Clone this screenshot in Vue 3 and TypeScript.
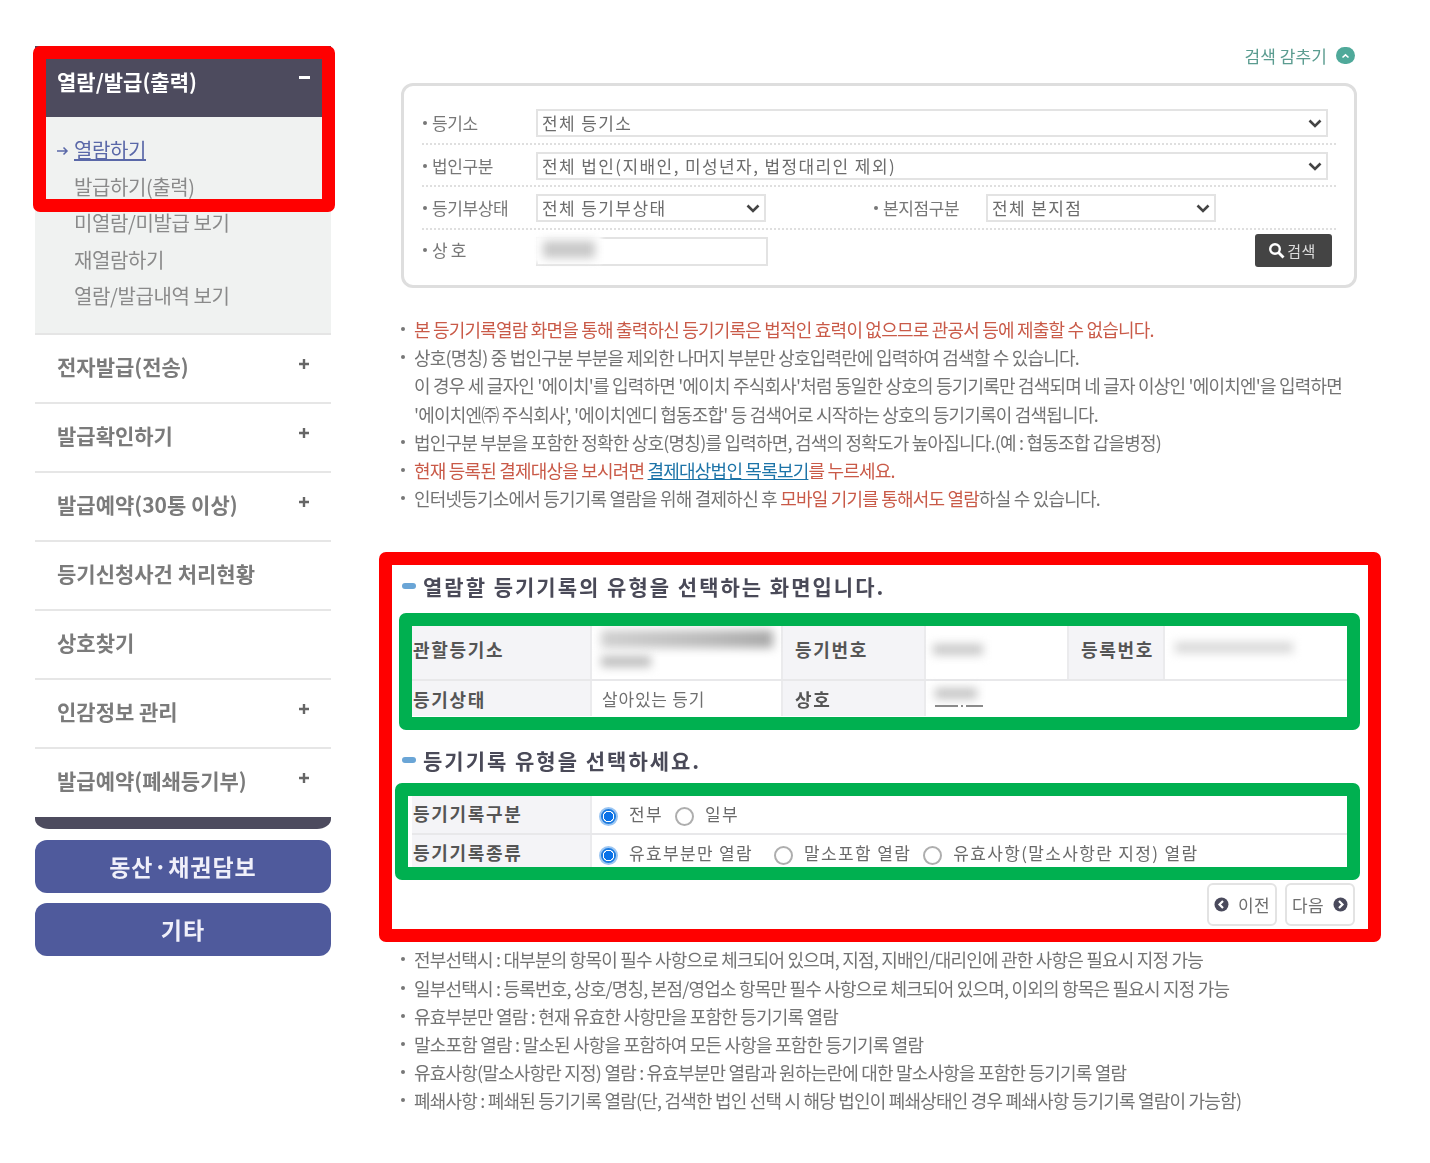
<script setup lang="ts">
interface Seg { t: string; c?: string }
const subItems: string[] = ['발급하기(출력)', '미열람/미발급 보기', '재열람하기', '열람/발급내역 보기']
const menu: { label: string; plus: boolean }[] = [
  { label: '전자발급(전송)', plus: true },
  { label: '발급확인하기', plus: true },
  { label: '발급예약(30통 이상)', plus: true },
  { label: '등기신청사건 처리현황', plus: false },
  { label: '상호찾기', plus: false },
  { label: '인감정보 관리', plus: true },
  { label: '발급예약(폐쇄등기부)', plus: true },
]
const topNotes: { segs: Seg[]; plain?: boolean }[] = [
  { segs: [{ t: '본 등기기록열람 화면을 통해 출력하신 등기기록은 법적인 효력이 없으므로 관공서 등에 제출할 수 없습니다.', c: 'red' }] },
  { segs: [{ t: '상호(명칭) 중 법인구분 부분을 제외한 나머지 부분만 상호입력란에 입력하여 검색할 수 있습니다.' }] },
  { plain: true, segs: [{ t: "이 경우 세 글자인 '에이치'를 입력하면 '에이치 주식회사'처럼 동일한 상호의 등기기록만 검색되며 네 글자 이상인 '에이치엔'을 입력하면" }] },
  { plain: true, segs: [{ t: "'에이치엔㈜ 주식회사', '에이치엔디 협동조합' 등 검색어로 시작하는 상호의 등기기록이 검색됩니다." }] },
  { segs: [{ t: '법인구분 부분을 포함한 정확한 상호(명칭)를 입력하면, 검색의 정확도가 높아집니다.(예 : 협동조합 갑을병정)' }] },
  { segs: [{ t: '현재 등록된 결제대상을 보시려면 ', c: 'red' }, { t: '결제대상법인 목록보기', c: 'link' }, { t: '를 누르세요.', c: 'red' }] },
  { segs: [{ t: '인터넷등기소에서 등기기록 열람을 위해 결제하신 후 ' }, { t: '모바일 기기를 통해서도 열람', c: 'red' }, { t: '하실 수 있습니다.' }] },
]
const bottomNotes: string[] = [
  '전부선택시 : 대부분의 항목이 필수 사항으로 체크되어 있으며, 지점, 지배인/대리인에 관한 사항은 필요시 지정 가능',
  '일부선택시 : 등록번호, 상호/명칭, 본점/영업소 항목만 필수 사항으로 체크되어 있으며, 이외의 항목은 필요시 지정 가능',
  '유효부분만 열람 : 현재 유효한 사항만을 포함한 등기기록 열람',
  '말소포함 열람 : 말소된 사항을 포함하여 모든 사항을 포함한 등기기록 열람',
  '유효사항(말소사항란 지정) 열람 : 유효부분만 열람과 원하는란에 대한 말소사항을 포함한 등기기록 열람',
  '폐쇄사항 : 폐쇄된 등기기록 열람(단, 검색한 법인 선택 시 해당 법인이 폐쇄상태인 경우 폐쇄사항 등기기록 열람이 가능함)',
]
</script>

<template>
  <div class="page">
    <div class="content">
      <aside class="side">
        <div class="side-head"><span>열람/발급(출력)</span><i class="minus"></i></div>
        <div class="side-sub">
          <div class="sub-row current">
            <svg class="arrow" width="13" height="10" viewBox="0 0 13 10"><path d="M1 5h10M7.500 1.500 11 5 7.500 8.500" fill="none" stroke="#5a68a8" stroke-width="1.500"/></svg>
            <a>열람하기</a>
          </div>
          <div v-for="s in subItems" :key="s" class="sub-row">{{ s }}</div>
        </div>
        <div v-for="m in menu" :key="m.label" class="side-item">
          <span>{{ m.label }}</span>
          <svg v-if="m.plus" class="plus" width="12" height="12" viewBox="0 0 12 12"><path d="M6 1v10M1 6h10" stroke="#666" stroke-width="2.400"/></svg>
        </div>
        <div class="side-end"></div>
        <div class="side-btn">동산·채권담보</div>
        <div class="side-btn">기타</div>
      </aside>

      <main class="main">
        <div class="hide-row">
          <span>검색 감추기</span>
          <i class="hide-ico"><svg width="9" height="6" viewBox="0 0 9 6"><path d="M1.500 4.500 4.500 1.800 7.500 4.500" fill="none" stroke="#fff" stroke-width="1.600"/></svg></i>
        </div>

        <div class="search">
          <div class="s-row">
            <label class="s-label">등기소</label>
            <div class="sel full"><select><option>전체 등기소</option></select><svg class="chev" width="14" height="9" viewBox="0 0 14 9"><path d="M1.500 1.500 7 7l5.500-5.500" fill="none" stroke="#444" stroke-width="2.600"/></svg></div>
          </div>
          <div class="s-row">
            <label class="s-label">법인구분</label>
            <div class="sel full"><select><option>전체 법인(지배인, 미성년자, 법정대리인 제외)</option></select><svg class="chev" width="14" height="9" viewBox="0 0 14 9"><path d="M1.500 1.500 7 7l5.500-5.500" fill="none" stroke="#444" stroke-width="2.600"/></svg></div>
          </div>
          <div class="s-row">
            <label class="s-label">등기부상태</label>
            <div class="sel half"><select><option>전체 등기부상태</option></select><svg class="chev" width="14" height="9" viewBox="0 0 14 9"><path d="M1.500 1.500 7 7l5.500-5.500" fill="none" stroke="#444" stroke-width="2.600"/></svg></div>
            <label class="s-label second">본지점구분</label>
            <div class="sel half"><select><option>전체 본지점</option></select><svg class="chev" width="14" height="9" viewBox="0 0 14 9"><path d="M1.500 1.500 7 7l5.500-5.500" fill="none" stroke="#444" stroke-width="2.600"/></svg></div>
          </div>
          <div class="s-row last">
            <label class="s-label name-label">상 호</label>
            <div class="name-input"><i class="smear name-smear"></i></div>
            <button class="search-btn">
              <svg width="17" height="17" viewBox="0 0 17 17"><circle cx="7" cy="7" r="4.800" fill="none" stroke="#fff" stroke-width="2.400"/><path d="m10.500 10.500 5 5" stroke="#fff" stroke-width="2.800"/></svg>
              <span>검색</span>
            </button>
          </div>
        </div>

        <ul class="notes top-notes">
          <li v-for="(n, i) in topNotes" :key="i" :class="{ plain: n.plain }">
            <span v-for="(s, j) in n.segs" :key="j" :class="s.c">{{ s.t }}</span>
          </li>
        </ul>

        <section class="panel">
          <h3 class="title first"><i class="pill"></i>열람할 등기기록의 유형을 선택하는 화면입니다.</h3>
          <table class="info">
            <tbody>
              <tr class="r1">
                <th class="c1">관할등기소</th>
                <td class="c2"><i class="smear s-a"></i><i class="smear s-b"></i></td>
                <th class="c3">등기번호</th>
                <td class="c4"><i class="smear s-c"></i></td>
                <th class="c5">등록번호</th>
                <td><i class="smear s-d"></i></td>
              </tr>
              <tr class="r2">
                <th>등기상태</th>
                <td class="val">살아있는 등기</td>
                <th class="inner">상호</th>
                <td colspan="3"><i class="smear s-e"></i><i class="dash"></i></td>
              </tr>
            </tbody>
          </table>
          <h3 class="title second"><i class="pill"></i>등기기록 유형을 선택하세요.</h3>
          <table class="info pick">
            <tbody>
              <tr class="p1">
                <th class="c1">등기기록구분</th>
                <td>
                  <div class="opts">
                    <span class="radio on"></span><span class="opt g1">전부</span>
                    <span class="radio"></span><span class="opt">일부</span>
                  </div>
                </td>
              </tr>
              <tr class="p2">
                <th>등기기록종류</th>
                <td>
                  <div class="opts">
                    <span class="radio on"></span><span class="opt g2">유효부분만 열람</span>
                    <span class="radio"></span><span class="opt g1">말소포함 열람</span>
                    <span class="radio"></span><span class="opt">유효사항(말소사항란 지정) 열람</span>
                  </div>
                </td>
              </tr>
            </tbody>
          </table>
          <div class="nav-row">
            <button class="nav-btn"><svg width="15" height="15" viewBox="0 0 15 15"><circle cx="7.500" cy="7.500" r="7" fill="#4a4a5c"/><path d="M9 4 5.500 7.500 9 11" fill="none" stroke="#fff" stroke-width="2.200"/></svg><span>이전</span></button>
            <button class="nav-btn"><span>다음</span><svg width="15" height="15" viewBox="0 0 15 15"><circle cx="7.500" cy="7.500" r="7" fill="#4a4a5c"/><path d="M6 4l3.500 3.500L6 11" fill="none" stroke="#fff" stroke-width="2.200"/></svg></button>
          </div>
        </section>

        <ul class="notes bottom-notes">
          <li v-for="n in bottomNotes" :key="n">{{ n }}</li>
        </ul>
      </main>
    </div>

    <div class="mark frame-red m1"></div>
    <div class="mark frame-red m2"></div>
    <div class="mark frame-green m3"></div>
    <div class="mark frame-green m4"></div>
  </div>
</template>

<style>
html, body { margin: 0; background: #fff; }
</style>

<style scoped>
.page {
  position: relative;
  width: 1430px;
  height: 1163px;
  overflow: hidden;
  background: #fff;
  font-family: "Noto Sans CJK KR", "Noto Sans", sans-serif;
  color: #666;
}
.content { display: flex; align-items: flex-start; filter: blur(0.7px); }

/* sidebar */
.side { width: 296px; margin: 46px 0 0 35px; flex: none; }
.side-head {
  height: 71px; background: #4d4b5e; color: #fff; display: flex; justify-content: space-between;
  padding: 20px 21px 0 22px; box-sizing: border-box; font-size: 21px; font-weight: 700; line-height: 30px;
}
.minus { width: 11px; height: 3px; background: #fff; margin-top: 10px; }
.side-sub {
  height: 218px; box-sizing: border-box; background: #f0f2f1; border-bottom: 2px solid #e5e5e5; padding-top: 15px;
}
.sub-row {
  height: 36.500px; line-height: 36.500px; padding-left: 39px; font-size: 20px; letter-spacing: -0.400px; color: #8a8a8a; position: relative;
}
.current a { color: #5a68a8; text-decoration: underline; }
.arrow { position: absolute; left: 21px; top: 14px; }
.side-item {
  height: 69px; box-sizing: border-box; border-bottom: 2px solid #e6e6e6; padding: 0 21px 0 22px;
  display: flex; justify-content: space-between; font-size: 21px; font-weight: 700; color: #7b7b7b; line-height: 62px;
}
.side-item:nth-last-of-type(4) { border-bottom: 0; height: 68px; }
.plus { margin-top: 23px; }
.side-end { height: 12px; background: #4d4b5e; border-radius: 0 0 14px 14px / 0 0 10px 10px; }
.side-btn {
  height: 53px; margin-top: 10px; border-radius: 12px; background: #4f5a9c; color: #f0f0fa; text-align: center;
  font-size: 23px; font-weight: 700; letter-spacing: 1px; line-height: 53px;
}
.side-end + .side-btn { margin-top: 11px; }

/* main */
.main { width: 956px; margin-left: 70px; flex: none; padding-top: 44px; }
.hide-row { height: 39px; display: flex; justify-content: flex-end; align-items: flex-start; padding-right: 2px; color: #5b9c90; font-size: 17px; letter-spacing: 0.100px; line-height: 23px; gap: 9px; }
.hide-ico { width: 19px; height: 17px; border-radius: 9px; background: #4fa99a; margin-top: 3px; display: flex; align-items: center; justify-content: center; }
.search {
  height: 205px; box-sizing: border-box; border: 3px solid #dedede; border-radius: 12px; padding: 16px 18px 0 18px;
}
.s-row { height: 42.500px; box-sizing: border-box; border-bottom: 2px dotted #dfdfdf; display: flex; align-items: flex-start; padding-top: 7px; }
.s-row.last { border-bottom: 0; padding-top: 7px; position: relative; }
.s-label { width: 114px; flex: none; font-size: 17px; letter-spacing: -0.400px; color: #777; line-height: 28px; position: relative; padding-left: 10px; box-sizing: border-box; }
.s-label::before { content: ""; position: absolute; left: 1px; top: 12px; width: 4px; height: 4px; border-radius: 50%; background: #777; }
.s-label.second { width: 113px; margin-left: 107px; }
.name-label { margin-top: -1px; }
.sel { position: relative; height: 28px; }
.sel.full { width: 792px; }
.sel.half { width: 230px; }
.sel select {
  appearance: none; width: 100%; height: 100%; box-sizing: border-box; border: 2px solid #e3e3e3; border-radius: 0; background: #fff;
  font-family: inherit; font-size: 17px; letter-spacing: 1.400px; color: #6c6c6c; padding: 0 0 0 4px; line-height: 22px; outline: none;
}
.chev { position: absolute; right: 6px; top: 10px; }
.name-input { width: 232px; height: 29px; box-sizing: border-box; border: 2px solid #e3e3e3; position: relative; }
.name-input::before { content: ""; position: absolute; left: -4px; top: -4px; width: 68px; height: 28px; background: #fff; filter: blur(2px); }
.smear { display: block; position: absolute; background: #c8c8c8; filter: blur(5px); }
.name-smear { left: 5px; top: 2px; width: 52px; height: 17px; }
.search-btn {
  margin: -3px 0 0 487px; width: 77px; height: 33px; border: 0; border-radius: 3px; background: #444; color: #ddd;
  display: flex; align-items: center; justify-content: center; gap: 2px; font-family: inherit; font-size: 15px; padding: 0 3px 0 0; letter-spacing: 0.500px;
}

/* notes */
.notes { list-style: none; margin: 0; padding: 0; font-size: 18px; letter-spacing: -0.800px; line-height: 28.200px; color: #737373; white-space: nowrap; }
.notes li { position: relative; padding-left: 13px; }
.notes li::before { content: ""; position: absolute; left: 0; top: 12px; width: 4px; height: 4px; border-radius: 50%; background: #777; }
.notes li.plain::before { display: none; }
.top-notes { margin-top: 27px; }
.red { color: #c95a48; }
.link { color: #1d74a8; text-decoration: underline; }

/* panel */
.panel { margin-top: 40px; height: 391px; }
.title { margin: 0; display: flex; align-items: center; color: #4a4a58; font-size: 21px; font-weight: 700; letter-spacing: 2px; line-height: 30px; }
.title.first { margin-left: 1px; padding-top: 19px; }
.title.second { margin-left: 1px; margin-top: 29px; }
.pill { width: 14px; height: 6px; border-radius: 3px; background: #6aa5d6; margin-right: 7px; }
.info { border-collapse: collapse; margin-left: 11px; width: 935px; table-layout: fixed; margin-top: 24px; font-size: 17px; color: #6f6f6f; }
.info th { background: #f4f4f7; color: #555; text-align: left; font-weight: 700; font-size: 18px; letter-spacing: 1.700px; padding: 0 0 0 1px; }
.info th, .info td { box-sizing: border-box; }
.info td, .info th { border-bottom: 2px solid #e8e8ea; border-right: 2px solid #ebebed; position: relative; }
.info tr:last-child td, .info tr:last-child th { border-bottom: 0; }
.info td:last-child { border-right: 0; }
.info .r1 th { padding-bottom: 6px; }
.info th.c3, .info th.c5, .info th.inner { padding-left: 12px; }
.c1 { width: 179px; }
.c2 { width: 191px; }
.c3 { width: 143px; }
.c4 { width: 143px; }
.c5 { width: 96px; }
.r1 { height: 55px; }
.r2 { height: 36px; }
.val { padding-left: 10px; letter-spacing: 0.800px; }
.s-a { left: 9px; top: 5px; width: 172px; height: 18px; background: linear-gradient(90deg, #d0d0d0, #bbb 60%, #a8a8a8); }
.s-b { left: 9px; top: 31px; width: 50px; height: 11px; background: #bdbdbd; }
.s-c { left: 7px; top: 19px; width: 50px; height: 11px; }
.s-d { left: 10px; top: 17px; width: 118px; height: 11px; background: #d8d8d8; }
.s-e { left: 9px; top: 7px; width: 42px; height: 11px; background: #c4c4c4; }
.dash { display: block; position: absolute; left: 9px; top: 24px; width: 48px; height: 2px; background: linear-gradient(90deg, #8a8a8a 0 23px, #fff 23px 26px, #8a8a8a 26px 28px, #fff 28px 31px, #8a8a8a 31px 48px); }
.pick { margin-top: 21px; }
.p1 { height: 38px; }
.p2 { height: 33px; }
.pick td { padding-left: 7px; white-space: nowrap; }
.info .p1 th { padding-bottom: 3px; }
.info .p2 th { padding-top: 2px; }
.info .p2 td { padding-top: 6px; }
.opts { display: flex; align-items: center; }
.radio { display: block; flex: none; width: 19px; height: 19px; box-sizing: border-box; border: 2px solid #aeaeae; border-radius: 50%; background: #fff; margin-top: 3px; }
.radio.on { border: 2px solid #9cc6f2; background: radial-gradient(circle, #0b72e8 0 4.500px, #fff 5px 5.500px, #1a7ae0 6px 7.500px); }
.opt { margin: -2px 13px 0 11px; letter-spacing: 1.350px; color: #6a6a6a; }
.opt.g2 { margin-right: 21px; }
.opt.g1 { margin-right: 12px; }
.nav-row { display: flex; justify-content: flex-end; gap: 8px; margin: 16px 2px 0 0; }
.nav-btn {
  width: 70px; height: 43px; box-sizing: border-box; border: 2px solid #e3e3e3; border-radius: 6px; background: #fff; color: #6f6f6f;
  display: flex; align-items: center; justify-content: center; gap: 9px; font-family: inherit; font-size: 17px; letter-spacing: 0.300px; padding: 0;
}
.bottom-notes { margin-top: 2px; }

/* annotation frames */
.mark { position: absolute; box-sizing: border-box; border-style: solid; border-width: 13px; border-radius: 7px; pointer-events: none; }
.frame-red { border-color: #ff0000; }
.frame-green { border-color: #00b050; }
.m1 { left: 33px; top: 46px; width: 302px; height: 166px; }
.m2 { left: 379px; top: 552px; width: 1002px; height: 390px; }
.m3 { left: 399px; top: 613px; width: 961px; height: 117px; }
.m4 { left: 395px; top: 783px; width: 965px; height: 97px; }
</style>
